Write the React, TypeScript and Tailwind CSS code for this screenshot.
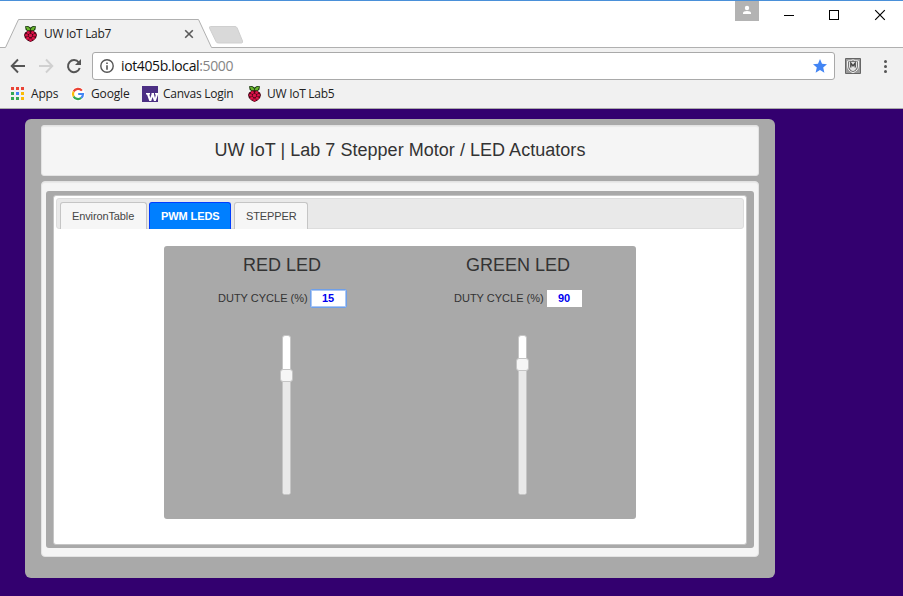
import React from "react";

function Raspberry() {
  return (
    <svg width="13" height="16" viewBox="0 0 13 16" className="shrink-0">
      <path d="M1 .3 4.200 .1 6.500 1.600 8.800 .1 12 .3 11.400 3.700 9 5.500H4L1.600 3.700Z" fill="#1f4212" />
      <path d="M1.900 1 4.200 .900 6.200 3 5.600 4.700 3.300 3.900ZM11.100 1 8.800 .900 6.800 3 7.400 4.700 9.700 3.900Z" fill="#69b52c" />
      <path d="M4 4.800 6.500 4.200l2.500.6L12 6.500l1 2.500-.9 3L9.500 14.500 6.500 16 3.500 14.500.900 12 0 9l1-2.500Z" fill="#4a0516" />
      <g fill="#dc1148">
        <circle cx="4.400" cy="6.600" r="1.500" /><circle cx="8.600" cy="6.600" r="1.500" />
        <circle cx="6.500" cy="9.500" r="1.800" />
        <circle cx="2.500" cy="9.200" r="1.400" /><circle cx="10.500" cy="9.200" r="1.400" />
        <circle cx="3.800" cy="12.200" r="1.600" /><circle cx="9.200" cy="12.200" r="1.600" />
        <circle cx="6.500" cy="14" r="1.400" />
      </g>
    </svg>
  );
}

function TabStrip() {
  return (
    <div className="relative h-12 border-t border-[#4a90d9] bg-white">
      <svg width="903" height="48" viewBox="0 0 903 48" className="absolute left-0 -top-px">
        <path d="M0 47.5H5.500L18.500 19.500H198.500L211.500 47.500H903V48H0Z" fill="#f1f1f1" />
        <path d="M0 47.500H5.500L18.500 19.500H198.500L211.500 47.500H903" fill="none" stroke="#b0b0b0" />
        <path d="M210.500 26.500H235Q236.500 26.500 237.200 28L242.500 41Q243 43 241.500 43H218.500Q216.500 43 216 41.500L209.500 28Q209 26.500 210.500 26.500Z" fill="#d9d9d9" stroke="#cfcfcf" />
        <path d="M185.200 30.200 192.800 37.800M192.800 30.200 185.200 37.800" stroke="#5a5a5a" strokeWidth="1.600" />
        <path d="M735 1H759V21H735Z" fill="#b3b3b3" />
        <circle cx="747" cy="8" r="2.200" fill="#fff" />
        <path d="M743 14V13Q743 11 747 11T751 13V14Z" fill="#fff" />
        <g fill="none" stroke="#000" shapeRendering="crispEdges">
          <path d="M784 15.500H794M829.500 10.500H838.500V19.500H829.500Z" />
        </g>
        <path d="M875.200 10.200 884.800 19.800M884.800 10.200 875.200 19.800" stroke="#000" strokeWidth="1.200" />
      </svg>
      <div className="relative z-10 flex h-[47px] items-start pl-6 pt-[25px]">
        <Raspberry />
        <span className="ml-[7px] text-[12px] leading-4 tracking-[-0.3px] text-[#222]">UW IoT Lab7</span>
      </div>
    </div>
  );
}

function Toolbar() {
  return (
    <div className="flex h-8 items-start pt-1">
      <svg width="92" height="28" viewBox="0 52 92 28" className="shrink-0">
        <path d="M25 66H12M18 59.500 11.700 66 18 72.500" fill="none" stroke="#555" strokeWidth="1.900" />
        <path d="M39 66H52M46 59.500 52.300 66 46 72.500" fill="none" stroke="#d0d0d0" strokeWidth="1.900" />
        <path d="M78.800 62.500A6 6 0 1 0 79.700 68" fill="none" stroke="#555" strokeWidth="2" />
        <path d="M81 59V65H75Z" fill="#555" />
      </svg>
      <div className="flex h-7 w-[743px] items-center rounded-[3px] border border-[#a9a9a9] bg-white pl-[7px] pr-[7px]">
        <svg width="14" height="14" viewBox="0 0 14 14">
          <circle cx="7" cy="7" r="6.200" fill="none" stroke="#555" strokeWidth="1.400" />
          <path d="M6.200 3.400H7.800V5H6.200ZM6.200 6.200H7.800V10.700H6.200Z" fill="#555" />
        </svg>
        <span className="ml-[7px] flex-1 text-[14px] leading-5 tracking-[-0.38px] text-[#111]">iot405b.local<span className="text-[#858585]">:5000</span></span>
        <svg width="14" height="14" viewBox="0 0 14 14">
          <path d="M7 0 9 4.800 14 5.200 10.200 8.600 11.400 13.700 7 11 2.600 13.700 3.800 8.600 0 5.200 5 4.800Z" fill="#4285f4" />
        </svg>
      </div>
      <svg width="68" height="28" viewBox="835 52 68 28" className="shrink-0">
        <path d="M845.500 58.500H860.500V73.500H845.500Z" fill="#999" stroke="#666" />
        <path d="M847.500 61Q850.500 61 853 59.800Q855.500 61 858.500 61V66Q858.500 70.500 853 72.800Q847.500 70.500 847.500 66Z" fill="#777" stroke="#eee" />
        <path d="M849 62H857V67Q856 70 853 71.300Q850 70 849 67Z" fill="#e2e2e2" />
        <path d="M850.800 67.500V63L853 66 855.200 63V67.500" fill="none" stroke="#444" strokeWidth="1.300" />
        <circle cx="885.500" cy="61.500" r="1.500" fill="#555" /><circle cx="885.500" cy="66.500" r="1.500" fill="#555" /><circle cx="885.500" cy="71.500" r="1.500" fill="#555" />
      </svg>
    </div>
  );
}

function Bookmarks() {
  const label = "text-[12px] leading-4 text-[#222]";
  return (
    <div className="flex h-[29px] items-start border-b border-[#aaa] pl-[11px] pt-[6px]">
      <svg width="13" height="13" viewBox="0 0 13 13" className="mt-px shrink-0">
        <path d="M0 0H3V3H0ZM5 0H8V3H5ZM10 0H13V3H10Z" fill="#ea4335" />
        <path d="M0 5H3V8H0ZM0 10H3V13H0ZM5 10H8V13H5Z" fill="#34a853" />
        <path d="M5 5H8V8H5Z" fill="#4285f4" />
        <path d="M10 5H13V8H10ZM10 10H13V13H10Z" fill="#fbbc05" />
      </svg>
      <span className={label + " ml-[7px] w-[40px] tracking-[-0.2px]"}>Apps</span>
      <svg width="14" height="16" viewBox="0 0 14 16" className="shrink-0">
        <circle cx="7" cy="8" r="7" fill="#fff" />
        <g fill="none" strokeWidth="2.200">
          <path d="M10.900 4.600A5 5 0 0 0 2.600 5.600" stroke="#ea4335" />
          <path d="M2.600 5.600A5 5 0 0 0 2.600 10.400" stroke="#fbbc05" />
          <path d="M2.600 10.400A5 5 0 0 0 10.200 11.900" stroke="#34a853" />
          <path d="M10.200 11.900Q12 10.500 12 8H7.200" stroke="#4285f4" />
        </g>
      </svg>
      <span className={label + " ml-[6px] w-[51px] tracking-[-0.15px]"}>Google</span>
      <svg width="16" height="16" viewBox="0 0 16 16" className="shrink-0">
        <path d="M0 0H16V16H0Z" fill="#4b2e83" />
        <path d="M4 7H8V8.500H7.300L8.300 12 9.500 8.200V7H12V8.500L13 12 13.800 8.500H13V7H16V8.500L13.800 15H12L10.600 11 9.200 15H7.300L5 8.500H4Z" fill="#fff" />
      </svg>
      <span className={label + " ml-[5px] w-[85px] tracking-[-0.25px]"}>Canvas Login</span>
      <Raspberry />
      <span className={label + " ml-[6px] tracking-[-0.27px]"}>UW IoT Lab5</span>
    </div>
  );
}

function Slider({ value, top }: { value: number; top: number }) {
  return (
    <div className="relative mt-[27px] ml-[118px] h-[160px] w-[9px] rounded-[3px] border border-[#c5c5c5] bg-white">
      <div className="absolute inset-x-0 bottom-0 rounded-b-[2px] bg-[#e9e9e9]" style={{ top }} />
      <div role="slider" aria-valuenow={value} className="absolute -left-[3px] h-[13px] w-[13px] rounded-[3px] border border-[#c5c5c5] bg-[#f6f6f6]" style={{ top: top - 6 }} />
    </div>
  );
}

function Led({ name, value, top, focused }: { name: string; value: number; top: number; focused?: boolean }) {
  return (
    <div className="w-[236px] pt-2">
      <h2 className="text-center text-[18px] leading-[22px] text-[#333]">{name}</h2>
      <div className="mt-[12px] flex h-5 items-center pl-[54px] text-[11px] text-[#333]">
        <span className="w-[92px] whitespace-nowrap">DUTY CYCLE (%)</span>
        <span className={focused
          ? "flex h-[19px] w-[37px] items-center justify-center rounded-[2px] border border-[#6f9fe8] bg-white pr-px font-bold text-[#0000f0] shadow-[inset_0_0_0_1px_#a9c7f5]"
          : "ml-px flex h-[17px] w-[35px] items-center justify-center bg-white pr-px font-bold text-[#0000f0]"}>{value}</span>
      </div>
      <Slider value={value} top={top} />
    </div>
  );
}

function Dashboard() {
  const tab = "flex h-[27px] items-center rounded-t-[3px] border border-b-0 pl-[11px] text-[11px] whitespace-nowrap";
  return (
    <div className="ml-[25px] mt-[10px] h-[459px] w-[750px] rounded-[6px] bg-[#a9a9a9] px-4 pt-[6px] font-['Liberation_Sans',Arial,sans-serif]">
      <div className="flex h-[51px] items-center justify-center rounded-[3px] border border-[#e3e3e3] bg-[#f5f5f5] text-[18px] tracking-[0.03px] text-[#333] shadow-[inset_0_1px_1px_rgba(0,0,0,0.05)]">
        UW IoT | Lab 7 Stepper Motor / LED Actuators
      </div>
      <div className="mt-[5px] h-[376px] rounded-[4px] border border-[#e3e3e3] bg-[#f5f5f5] px-1 pt-[9px] shadow-[inset_0_1px_1px_rgba(0,0,0,0.05)]">
        <div className="h-[357px] rounded-[3px] bg-[#a9a9a9] px-[7px] pt-1">
          <div className="h-[350px] rounded-[3px] border border-[#c5c5c5] bg-white p-[2px]">
            <div className="flex h-[31px] items-end rounded-[3px] border border-[#dddddd] bg-[#e9e9e9] pl-[3px] pt-[3px]">
              <div className={tab + " -mb-px w-[87px] border-[#c5c5c5] bg-[#f6f6f6] tracking-[-0.12px] text-[#454545]"}>EnvironTable</div>
              <div className={tab + " -mb-px ml-[2px] w-[82px] border-[#003eff] bg-[#007fff] font-bold tracking-[-0.1px] text-white"}>PWM LEDS</div>
              <div className={tab + " -mb-px ml-[3px] w-[74px] border-[#c5c5c5] bg-[#f6f6f6] tracking-[-0.1px] text-[#454545]"}>STEPPER</div>
            </div>
            <div className="ml-[108px] mt-[17px] flex h-[273px] w-[472px] rounded-[3px] bg-[#a9a9a9]">
              <Led name="RED LED" value={15} top={39} focused />
              <Led name="GREEN LED" value={90} top={28} />
            </div>
          </div>
        </div>
      </div>
    </div>
  );
}

export default function App() {
  return (
    <div className="h-[596px] w-[903px] overflow-hidden bg-[#33006f] font-['Open_Sans','Noto_Sans',sans-serif]">
      <div className="bg-[#f1f1f1]">
        <TabStrip />
        <Toolbar />
        <Bookmarks />
      </div>
      <Dashboard />
    </div>
  );
}
